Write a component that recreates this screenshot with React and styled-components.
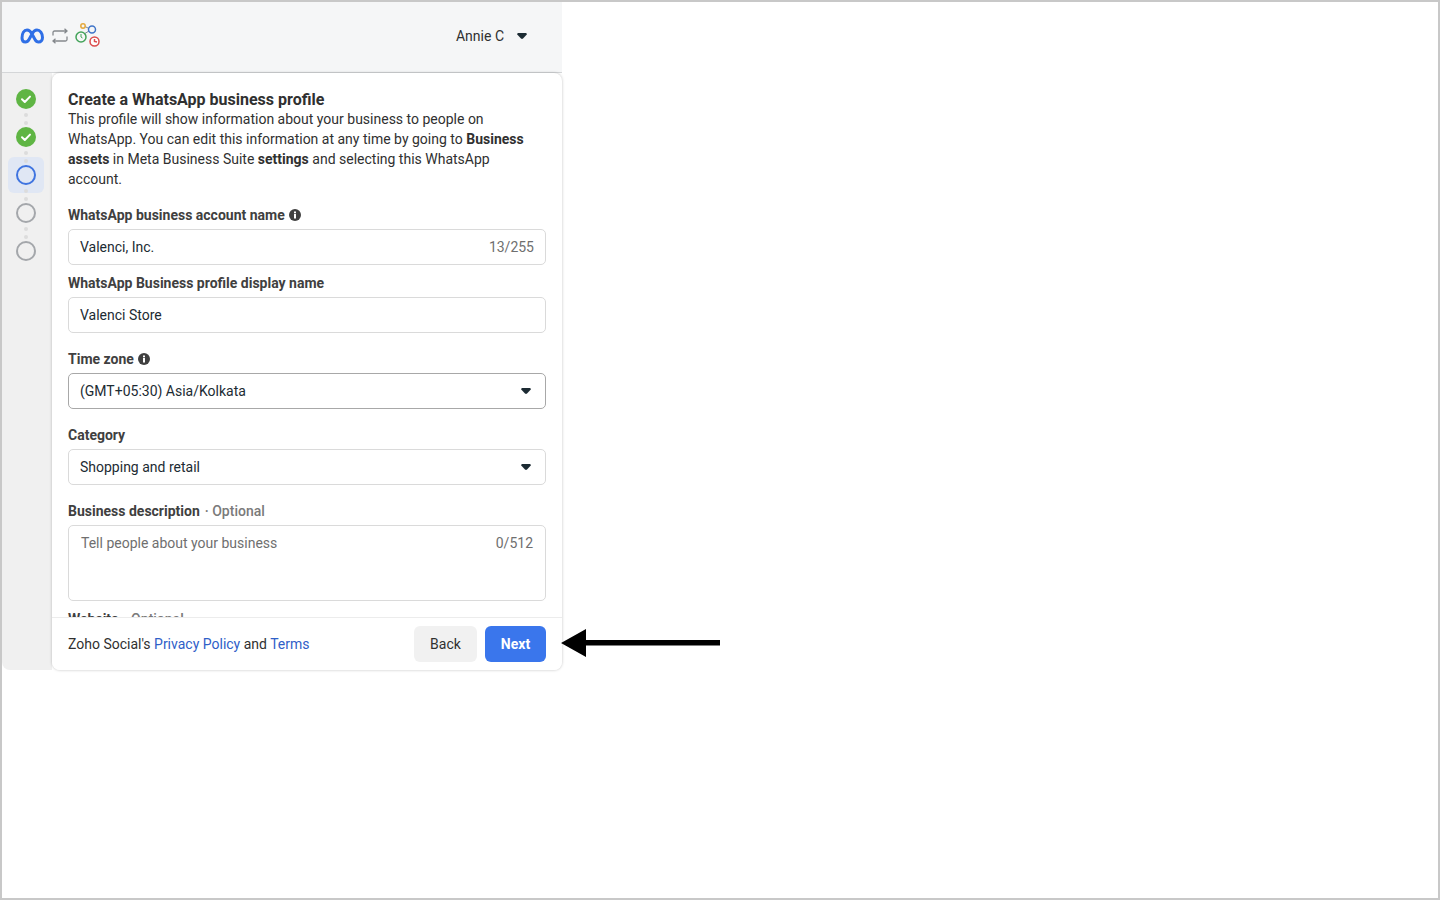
import React from 'react';
import styled, { createGlobalStyle } from 'styled-components';

const GlobalStyle = createGlobalStyle`
  html, body { margin: 0; padding: 0; background: #fff; }
  body { font-family: Roboto, "Liberation Sans", sans-serif; color: #1c2b33; }
  * { box-sizing: border-box; }
`;

const Frame = styled.div`
  position: relative;
  width: 1440px;
  height: 900px;
  border: 2px solid #c8c8c8;
  background: #fff;
  overflow: hidden;
`;

const Popup = styled.div`
  width: 560px;
  height: 668px;
  display: flex;
  flex-direction: column;
`;

const Header = styled.header`
  height: 71px;
  flex: none;
  display: flex;
  align-items: center;
  justify-content: space-between;
  padding: 0 35px 2px 17px;
  background: #f5f6f7;
  border-bottom: 1px solid #d4d6d8;
`;

const Logos = styled.div`
  display: flex;
  align-items: center;
  gap: 6px;
`;

const Account = styled.div`
  display: flex;
  align-items: center;
  gap: 13px;
  font-size: 14px;
  color: #303030;
`;

const Caret = styled.span`
  display: block;
  width: 10px;
  height: 6px;
  background: #1c2b33;
  clip-path: polygon(8% 0, 92% 0, 100% 22%, 60% 90%, 50% 100%, 40% 90%, 0 22%);
`;

const Body = styled.div`
  flex: 1;
  min-height: 0;
  display: flex;
`;

const Rail = styled.nav`
  width: 50px;
  flex: none;
  display: flex;
  flex-direction: column;
  align-items: center;
  padding: 8px 2px 0 0;
  background: #f0f0f0;
  border-bottom-left-radius: 8px;
`;

const StepBox = styled.div`
  width: 36px;
  height: 36px;
  display: flex;
  align-items: center;
  justify-content: center;
  border-radius: 6px;
  background: ${(p) => (p.$active ? '#e0e7f4' : 'transparent')};
`;

const Dots = styled.div`
  height: 2px;
  position: relative;
  width: 4px;
  &::before {
    content: '';
    position: absolute;
    left: 0;
    top: -4px;
    width: 4px;
    height: 4px;
    border-radius: 50%;
    background: #dcdcdc;
    box-shadow: 0 8px 0 #dcdcdc;
  }
`;

const Ring = styled.span`
  display: block;
  width: 20px;
  height: 20px;
  border-radius: 50%;
  border: 2px solid ${(p) => (p.$active ? '#3f74e0' : '#a4a7ab')};
`;

const Card = styled.main`
  width: 510px;
  flex: none;
  display: flex;
  flex-direction: column;
  background: #fff;
  border-radius: 8px;
  box-shadow: 0 0 3px rgba(0, 0, 0, 0.25);
  position: relative;
`;

const Scroll = styled.div`
  flex: 1;
  min-height: 0;
  overflow: hidden;
  padding: 16px 16px 0;
`;

const Title = styled.h1`
  margin: 1px 0 -1px;
  font-size: 16px;
  line-height: 20px;
  font-weight: 700;
  color: #303030;
`;

const Intro = styled.p`
  margin: 0;
  font-size: 14px;
  line-height: 20px;
  color: #303030;
  b { font-weight: 700; }
`;

const Field = styled.div`
  margin-top: ${(p) => p.$gap || 16}px;
`;

const Label = styled.div`
  display: flex;
  align-items: center;
  gap: 4px;
  height: 20px;
  margin-bottom: 4px;
  font-size: 14px;
  line-height: 20px;
  font-weight: 700;
  color: #404040;
  span { margin-left: 1px; font-weight: 500; color: #7a7a7a; }
`;

const Box = styled.div`
  height: ${(p) => p.$height || 36}px;
  display: flex;
  align-items: ${(p) => (p.$multi ? 'flex-start' : 'center')};
  justify-content: space-between;
  padding: ${(p) => (p.$multi ? '8px 12px' : '0 11px')};
  border: 1px solid ${(p) => (p.$strong ? '#a8a8a8' : '#dadada')};
  border-radius: 5px;
  font-size: 14px;
  line-height: 18px;
  color: #1c2b33;
  background: #fff;
  ${Caret} { margin-right: 3px; }
`;

const Hint = styled.span`
  color: #6f6f6f;
`;

const Footer = styled.footer`
  height: 53px;
  flex: none;
  display: flex;
  align-items: center;
  justify-content: space-between;
  padding: 0 16px;
  border-top: 1px solid #ececec;
  background: #fff;
  border-radius: 0 0 8px 8px;
  font-size: 14px;
  color: #303030;
`;

const Policy = styled.div`
  a { color: #2f60c8; text-decoration: none; }
`;

const Buttons = styled.div`
  display: flex;
  gap: 8px;
`;

const Button = styled.button`
  height: 36px;
  width: ${(p) => (p.$primary ? 61 : 63)}px;
  border: 0;
  border-radius: 6px;
  font-family: inherit;
  font-size: 14px;
  font-weight: ${(p) => (p.$primary ? 700 : 400)};
  color: ${(p) => (p.$primary ? '#fff' : '#303030')};
  background: ${(p) => (p.$primary ? '#3a76ec' : '#f1f1f1')};
`;

const Pointer = styled.svg`
  position: absolute;
  left: 559px;
  top: 627px;
`;

const MetaLogo = () => (
  <svg width="26" height="16" viewBox="0 0 26 16" fill="none">
    <path
      d="M3 10C3 5.500 5 2 8 2c2.500 0 4 2 5 4l3 5.500c1 1.800 2 2.500 3.500 2.500 2.500 0 4-2 4-4.500C23.500 5 21 2 18 2c-2.500 0-4 2-5 4l-3 5.500C9 13.300 8 14 6.500 14 4.500 14 3 12.500 3 10z"
      stroke="#2f6fe6"
      strokeWidth="3"
      strokeLinejoin="round"
    />
  </svg>
);

const SwapIcon = () => (
  <svg width="18" height="16" viewBox="0 0 18 16" fill="none" stroke="#85898d" strokeWidth="1.300">
    <path d="M2 7.500V4.500A1.500 1.500 0 0 1 3.500 3H16M13.500 .8 16 3l-2.500 2.200" />
    <path d="M16 8.500v3a1.500 1.500 0 0 1-1.500 1.500H2M4.500 10.800 2 13l2.500 2.200" />
  </svg>
);

const SuiteIcon = () => (
  <svg width="26" height="26" viewBox="0 0 26 26" fill="none">
    <path d="M10 3.500 14 5.500M9 11l5-3" stroke="#7d8a95" strokeWidth="1" />
    <circle cx="8" cy="3" r="2.200" stroke="#e5a83b" strokeWidth="1.500" />
    <circle cx="17" cy="6.500" r="3.500" stroke="#3f74c8" strokeWidth="1.500" />
    <circle cx="6" cy="14" r="5" stroke="#43a35a" strokeWidth="1.500" />
    <path d="M6 11v3l1.500 1" stroke="#43a35a" strokeWidth="1" />
    <circle cx="19.500" cy="18.500" r="4.500" fill="#fff" stroke="#db4b4b" strokeWidth="1.500" />
    <path d="M19.500 16v2.500l2.500 .5" stroke="#db4b4b" strokeWidth="1.500" />
  </svg>
);

const CheckStep = () => (
  <svg width="20" height="20" viewBox="0 0 20 20">
    <circle cx="10" cy="10" r="10" fill="#5fb544" />
    <path d="M6 10.300 8.800 13 14 7.600" fill="none" stroke="#fff" strokeWidth="2" strokeLinecap="round" strokeLinejoin="round" />
  </svg>
);

const Info = () => (
  <svg width="12" height="12" viewBox="0 0 12 12">
    <circle cx="6" cy="6" r="6" fill="#404040" />
    <rect x="5" y="5" width="2" height="4.500" fill="#fff" />
    <rect x="5" y="2.500" width="2" height="1.800" fill="#fff" />
  </svg>
);

const steps = ['done', 'done', 'active', 'todo', 'todo'];

export default function App() {
  return (
    <>
      <GlobalStyle />
      <Frame>
        <Popup>
          <Header>
            <Logos>
              <MetaLogo />
              <SwapIcon />
              <SuiteIcon />
            </Logos>
            <Account>
              Annie C
              <Caret />
            </Account>
          </Header>
          <Body>
            <Rail>
              {steps.map((step, i) => (
                <React.Fragment key={i}>
                  {i > 0 && <Dots />}
                  <StepBox $active={step === 'active'}>
                    {step === 'done' ? <CheckStep /> : <Ring $active={step === 'active'} />}
                  </StepBox>
                </React.Fragment>
              ))}
            </Rail>
            <Card>
              <Scroll>
                <Title>Create a WhatsApp business profile</Title>
                <Intro>
                  This profile will show information about your business to people on
                  <br />
                  WhatsApp. You can edit this information at any time by going to <b>Business</b>
                  <br />
                  <b>assets</b> in Meta Business Suite <b>settings</b> and selecting this WhatsApp
                  <br />
                  account.
                </Intro>
                <Field>
                  <Label>WhatsApp business account name <Info /></Label>
                  <Box>
                    Valenci, Inc.
                    <Hint>13/255</Hint>
                  </Box>
                </Field>
                <Field $gap={8}>
                  <Label>WhatsApp Business profile display name</Label>
                  <Box>Valenci Store</Box>
                </Field>
                <Field>
                  <Label>Time zone <Info /></Label>
                  <Box $strong>
                    (GMT+05:30) Asia/Kolkata
                    <Caret />
                  </Box>
                </Field>
                <Field>
                  <Label>Category</Label>
                  <Box>
                    Shopping and retail
                    <Caret />
                  </Box>
                </Field>
                <Field>
                  <Label>Business description <span>· Optional</span></Label>
                  <Box $multi $height={76}>
                    <Hint>Tell people about your business</Hint>
                    <Hint>0/512</Hint>
                  </Box>
                </Field>
                <Field $gap={8}>
                  <Label>Website <span>· Optional</span></Label>
                </Field>
              </Scroll>
              <Footer>
                <Policy>
                  Zoho Social's <a href="#privacy">Privacy Policy</a> and <a href="#terms">Terms</a>
                </Policy>
                <Buttons>
                  <Button>Back</Button>
                  <Button $primary>Next</Button>
                </Buttons>
              </Footer>
            </Card>
          </Body>
        </Popup>
        <Pointer width="159" height="28" viewBox="0 0 159 28">
          <path d="M0 14 25 0V11H159V16.500H25V28z" fill="#000" />
        </Pointer>
      </Frame>
    </>
  );
}
